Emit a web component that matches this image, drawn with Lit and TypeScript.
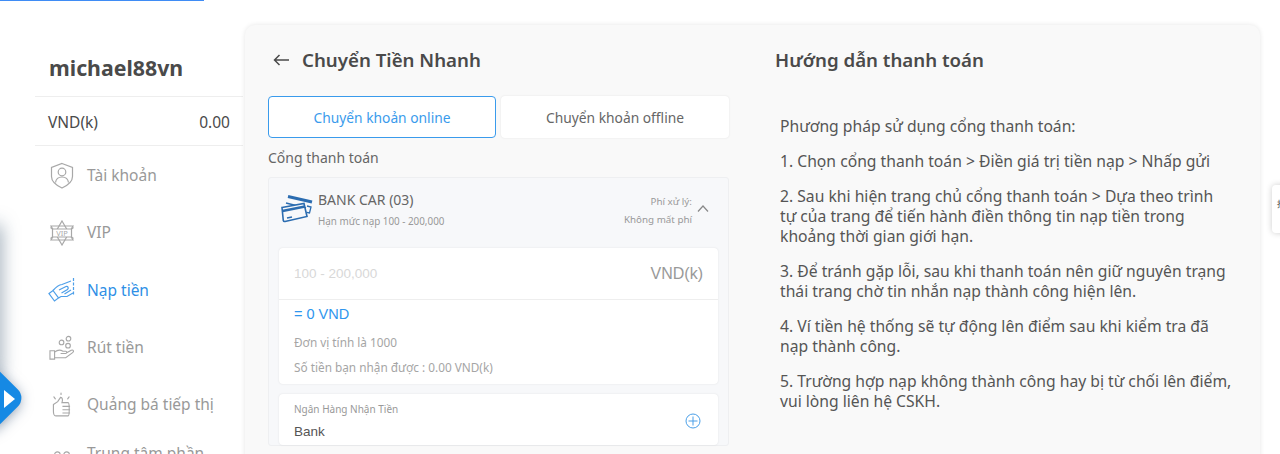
import { LitElement, html, css, svg } from 'lit';
import { customElement } from 'lit/decorators.js';

const shield = svg`<path d="M12 1.500 22.500 5.500v9c0 5-4 8.500-10.500 11.500C5.500 23 1.500 19.500 1.500 14.500v-9z"/><circle cx="12" cy="10" r="3.800"/><path d="M5.500 20.500c.5-3.500 3-5.500 6.500-5.500s6 2 6.500 5.500"/>`;
const vip = svg`<path d="M13 1 24 20H2z"/><path d="M13 25 2 6H24z"/><path d="M3.500 9h19v8h-19z" fill="#fff"/><path d="M3.500 9 1.500 7.500M3.500 17l-2 1.500M22.500 9l2-1.500M22.500 17l2 1.500"/><text x="13" y="15.600" text-anchor="middle" font-size="7.500" font-family="Noto Sans" stroke="none" fill="currentColor">VIP</text>`;
const deposit = svg`<path d="M1 16.500 5 13.500 10.500 21 6.500 24z"/><path d="M5 13.500C8 10 10 8 14 7.500L23 4"/><path d="M10.500 21 13 19.500H19L25 16"/><path d="M11 13 18 9.500C20 9 21 11 19.500 12.500L13.500 16"/><path d="M16.500 17 23 13"/><path d="M25.500 1v17" stroke-dasharray="3 1.500"/>`;
const withdraw = svg`<path d="M1 17h5v9H1z"/><path d="M6 18.500C9 16 12 15.500 15 17.500H18C19.500 17.500 19.500 20 18 20H12.500M18.500 19.500 24 16.500C26 15.500 27.500 17.500 25.500 19L18 24.500H6"/><circle cx="13.500" cy="8" r="2.500"/><circle cx="21" cy="4" r="2.500"/><circle cx="20.500" cy="11.500" r="2.500"/>`;
const thumb = svg`<path d="M1.500 13 6 10 9 5.500C11 5.500 11.500 8 10.500 11H17C18.500 11 18.500 25 17 25H4C2 25 1.500 22 1.500 20z"/><path d="M11 15H19M11 18.500H19M11 22H19"/><path d="M2 5l1.500 2M9.500 1v1.500M18 5l-1.500 2" stroke-linecap="round"/>`;
const share = svg`<circle cx="8" cy="5" r="3"/><circle cx="18" cy="5" r="3"/><path d="M2 16c0-4 3-6 6-6s6 2 6 6M12 16c0-4 3-6 6-6s6 2 6 6"/>`;

const menu = [
  { label: 'Tài khoản', icon: shield, box: '0 0 24 27', w: 24, h: 27 },
  { label: 'VIP', icon: vip, box: '0 0 26 26', w: 26, h: 26 },
  { label: 'Nạp tiền', icon: deposit, box: '0 0 27 26', w: 27, h: 26, active: true },
  { label: 'Rút tiền', icon: withdraw, box: '0 0 28 27', w: 26, h: 25 },
  { label: 'Quảng bá tiếp thị', icon: thumb, box: '0 0 20 26', w: 19, h: 25 },
  { label: 'Trung tâm phần thưởng', icon: share, box: '0 0 26 26', w: 24, h: 24 },
];

const steps = [
  'Phương pháp sử dụng cổng thanh toán:',
  '1. Chọn cổng thanh toán > Điền giá trị tiền nạp > Nhấp gửi',
  '2. Sau khi hiện trang chủ cổng thanh toán > Dựa theo trình tự của trang để tiến hành điền thông tin nạp tiền trong khoảng thời gian giới hạn.',
  '3. Để tránh gặp lỗi, sau khi thanh toán nên giữ nguyên trạng thái trang chờ tin nhắn nạp thành công hiện lên.',
  '4. Ví tiền hệ thống sẽ tự động lên điểm sau khi kiểm tra đã nạp thành công.',
  '5. Trường hợp nạp không thành công hay bị từ chối lên điểm, vui lòng liên hệ CSKH.',
];

@customElement('app-root')
export class AppRoot extends LitElement {
  static styles = css`
    :host {
      display: block;
      position: relative;
      height: 454px;
      overflow: hidden;
      background: #fff;
      font-family: 'Noto Sans', sans-serif;
      color: #4a4a4a;
    }
    .topline {
      position: absolute;
      left: 0;
      top: 0;
      width: 204px;
      height: 1px;
      background: #3f8cf5;
    }
    .page {
      display: flex;
      padding: 25px 20px 0 35px;
      gap: 2px;
      align-items: flex-start;
    }
    .sidebar {
      width: 208px;
      flex: none;
    }
    .name {
      font-size: 21.300px;
      font-weight: 700;
      line-height: 27px;
      padding: 29px 0 15px 14px;
      border-bottom: 1px solid #eeeeee;
    }
    .balance {
      display: flex;
      justify-content: space-between;
      font-size: 15.500px;
      line-height: 20px;
      padding: 15px 13px 13px;
      border-bottom: 1px solid #eeeeee;
    }
    .menu-item {
      display: flex;
      align-items: center;
      height: 57.300px;
      box-sizing: border-box;
      padding: 2px 20px 0 14px;
      font-size: 15.500px;
      line-height: 17px;
      color: #999;
    }
    .menu-item.active {
      color: #2f8fe6;
    }
    .menu-icon {
      width: 38px;
      flex: none;
      display: flex;
      justify-content: center;
      padding-right: 13px;
      box-sizing: border-box;
    }
    .menu-icon svg {
      fill: none;
      stroke: currentColor;
      stroke-width: 1.200;
      opacity: 0.85;
      flex: none;
    }
    .panel {
      flex: 1;
      display: flex;
      height: 460px;
      background: #f9f9f9;
      border-radius: 10px 10px 0 0;
      box-shadow: 0 0 5px rgba(0, 0, 0, 0.1);
    }
    .left {
      width: 461px;
      margin-left: 23px;
      flex: none;
    }
    .heading {
      display: flex;
      align-items: center;
      gap: 13px;
      height: 69px;
      margin-bottom: 2px;
      font-size: 18.700px;
      font-weight: 600;
      color: #4a4a4a;
    }
    .heading svg {
      margin-left: 5px;
      width: 16px;
      height: 12px;
    }
    .tabs {
      display: grid;
      grid-template-columns: 228px 228px;
      gap: 5px;
    }
    .tab {
      height: 42px;
      box-sizing: border-box;
      display: flex;
      align-items: center;
      justify-content: center;
      background: #fff;
      border-radius: 4px;
      font-size: 13.800px;
      color: #666;
      box-shadow: 0 0 2px rgba(0, 0, 0, 0.1);
    }
    .tab.active {
      border: 1px solid #3a9bec;
      color: #3a9bec;
      box-shadow: none;
    }
    .gate-label {
      font-size: 14px;
      line-height: 20px;
      margin-top: 10px;
      color: #666;
    }
    .gate {
      margin-top: 9px;
      box-sizing: border-box;
      background: #f7f8fa;
      border: 1px solid #eeeff1;
      border-radius: 3px;
      padding: 0 10px;
    }
    .gate-head {
      display: flex;
      align-items: flex-start;
      height: 70px;
    }
    .card-icon {
      width: 34px;
      height: 30px;
      flex: none;
      margin: 16px 5px 0 0;
    }
    .gate-info {
      flex: 1;
      padding-top: 13px;
    }
    .gate-title {
      font-size: 14px;
      line-height: 18px;
      color: #666;
    }
    .gate-sub {
      font-size: 9.850px;
      line-height: 14px;
      margin-top: 5px;
      color: #999;
    }
    .gate-fee {
      text-align: right;
      font-size: 9.800px;
      line-height: 18px;
      padding-top: 15px;
      color: #999;
    }
    .chevron {
      width: 12px;
      height: 7px;
      margin: 27px 9px 0 5px;
      flex: none;
    }
    .amount {
      background: #fff;
      border-radius: 4px;
      box-shadow: 0 0 2px rgba(0, 0, 0, 0.1);
      height: 136px;
    }
    .amount-input {
      display: flex;
      justify-content: space-between;
      align-items: center;
      height: 52px;
      box-sizing: border-box;
      padding: 0 15px 0 15px;
      border-bottom: 1px solid #eeeeee;
      font-family: 'Liberation Sans', sans-serif;
    }
    .placeholder {
      font-size: 13.500px;
      color: #d8d8d8;
    }
    .unit {
      font-size: 16px;
      color: #999;
    }
    .converted {
      font-family: 'Liberation Sans', sans-serif;
      color: #2f96ee;
      font-size: 14.500px;
      line-height: 20px;
      padding: 4px 15px 0;
    }
    .hint {
      font-size: 11.800px;
      line-height: 16px;
      color: #a5a5a5;
      padding: 10px 15px 0;
    }
    .hint + .hint {
      padding-top: 9px;
    }
    .bank {
      display: flex;
      justify-content: space-between;
      align-items: center;
      margin-top: 10px;
      height: 51px;
      box-sizing: border-box;
      padding: 3px 17px 0 15px;
      background: #fff;
      border-radius: 4px;
      box-shadow: 0 0 2px rgba(0, 0, 0, 0.1);
    }
    .bank-label {
      font-size: 10px;
      line-height: 14px;
      color: #999;
    }
    .bank-value {
      font-family: 'Liberation Sans', sans-serif;
      font-size: 13.500px;
      line-height: 18px;
      margin-top: 7px;
      color: #555;
    }
    .plus {
      width: 16px;
      height: 16px;
      margin-top: -1px;
    }
    .right {
      margin-left: 46px;
      width: 465px;
      flex: none;
    }
    .right h2 {
      margin: 0;
      font-size: 18.700px;
      font-weight: 600;
      line-height: 69px;
    }
    .guide {
      margin: 22px 0 0 5px;
      width: 452px;
      font-size: 15.700px;
      line-height: 20px;
      color: #555;
    }
    .guide p {
      margin: 0 0 15px;
    }
    .side-tab {
      position: absolute;
      right: -8px;
      top: 185px;
      width: 16px;
      height: 48px;
      background: #fff;
      border-radius: 4px;
      box-shadow: 0 0 6px rgba(0, 0, 0, 0.2);
      padding: 14px 0 0 5px;
      box-sizing: border-box;
      font-size: 9px;
      line-height: 9px;
      overflow: hidden;
    }
    .drawer-shadow {
      position: absolute;
      left: -12px;
      top: 225px;
      width: 12px;
      height: 150px;
      box-shadow: 0 0 18px rgba(30, 60, 90, 0.55);
    }
    .drawer {
      position: absolute;
      left: -34px;
      top: 373px;
      width: 50px;
      height: 50px;
      background: #1689e4;
      border-radius: 12px;
      transform: rotate(45deg);
      box-shadow: 0 3px 14px rgba(20, 50, 90, 0.55);
    }
    .drawer-arrow {
      position: absolute;
      left: 4px;
      top: 390px;
      width: 0;
      height: 0;
      border-left: 11px solid #fff;
      border-top: 9px solid transparent;
      border-bottom: 9px solid transparent;
    }
  `;

  render() {
    return html`
      <div class="topline"></div>
      <div class="page">
        <aside class="sidebar">
          <div class="name">michael88vn</div>
          <div class="balance"><span>VND(k)</span><span>0.00</span></div>
          ${menu.map(
            (m) => html`
              <div class="menu-item ${m.active ? 'active' : ''}">
                <span class="menu-icon">
                  <svg viewBox=${m.box} width=${m.w} height=${m.h}>${m.icon}</svg>
                </span>
                <span>${m.label}</span>
              </div>
            `
          )}
        </aside>
        <main class="panel">
          <section class="left">
            <div class="heading">
              <svg viewBox="0 0 16 12" fill="none" stroke="#4a4a4a" stroke-width="1.500">
                <path d="M16 6H1.500M6.500 1 1.500 6l5 5" />
              </svg>
              Chuyển Tiền Nhanh
            </div>
            <div class="tabs">
              <div class="tab active">Chuyển khoản online</div>
              <div class="tab">Chuyển khoản offline</div>
            </div>
            <div class="gate-label">Cổng thanh toán</div>
            <div class="gate">
              <div class="gate-head">
                <svg class="card-icon" viewBox="0 0 34 30" fill="none" stroke="#2b6cb0" stroke-width="1.600">
                  <path d="M9 2.500 33 8" stroke-width="3" />
                  <path d="M7 9 27 14" stroke-width="1.300" />
                  <path d="M28 12l4 1-1.500 6-3-.7" stroke-width="1.300" />
                  <path d="M3 13.500 25 9.500l3 13-22 5c-1 .2-1.500-.2-1.700-1z" fill="#f7f8fa" />
                  <path d="M3.500 17 26 12.500" stroke-width="2.500" />
                  <path d="M8 24l5-1" />
                </svg>
                <div class="gate-info">
                  <div class="gate-title">BANK CAR (03)</div>
                  <div class="gate-sub">Hạn mức nạp 100 - 200,000</div>
                </div>
                <div class="gate-fee">Phí xử lý:<br />Không mất phí</div>
                <svg class="chevron" viewBox="0 0 12 7" fill="none" stroke="#888" stroke-width="1.200">
                  <path d="M1 6.500 6 1l5 5.500" />
                </svg>
              </div>
              <div class="amount">
                <div class="amount-input">
                  <span class="placeholder">100 - 200,000</span>
                  <span class="unit">VND(k)</span>
                </div>
                <div class="converted">= 0 VND</div>
                <div class="hint">Đơn vị tính là 1000</div>
                <div class="hint">Số tiền bạn nhận được : 0.00 VND(k)</div>
              </div>
              <div class="bank">
                <div>
                  <div class="bank-label">Ngân Hàng Nhận Tiền</div>
                  <div class="bank-value">Bank</div>
                </div>
                <svg class="plus" viewBox="0 0 16 16" fill="none" stroke="#4a9fe8" stroke-width="1">
                  <circle cx="8" cy="8" r="7" />
                  <path d="M8 3.500v9M3.500 8h9" />
                </svg>
              </div>
            </div>
          </section>
          <section class="right">
            <h2>Hướng dẫn thanh toán</h2>
            <div class="guide">${steps.map((s) => html`<p>${s}</p>`)}</div>
          </section>
        </main>
      </div>
      <div class="side-tab">抢</div>
      <div class="drawer-shadow"></div>
      <div class="drawer"></div>
      <div class="drawer-arrow"></div>
    `;
  }
}
